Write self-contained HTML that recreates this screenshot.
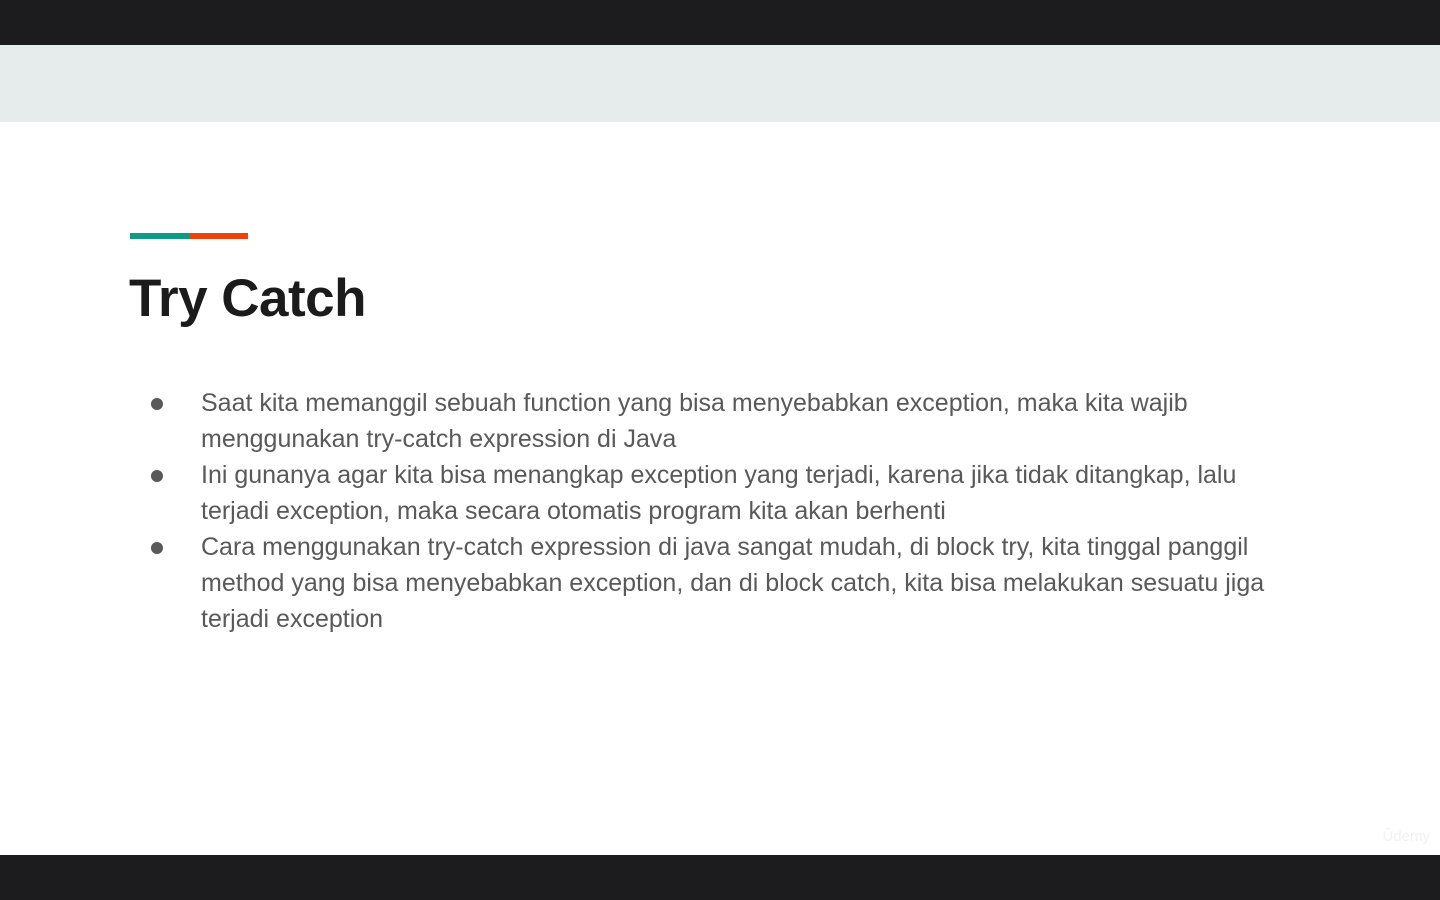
<!DOCTYPE html>
<html><head><meta charset="utf-8"><style>
html,body{margin:0;padding:0}
body{width:1440px;height:900px;background:#1c1c1e;position:relative;overflow:hidden;font-family:"Liberation Sans",sans-serif}
.top{position:absolute;left:0;top:45px;width:1440px;height:77px;background:#e6eceb}
.slide{position:absolute;left:0;top:122px;width:1440px;height:733px;background:#fff}
.b1{position:absolute;left:130px;top:233px;width:60px;height:6px;background:#0e9b86}
.b2{position:absolute;left:190px;top:233px;width:58px;height:6px;background:#f2400b}
h1{position:absolute;left:129px;top:268px;margin:0;font-size:53px;font-weight:bold;color:#1b1b1b;line-height:62px;letter-spacing:-0.5px}
.t{position:absolute;left:201px;font-size:25px;color:#595959;white-space:nowrap;line-height:36px}
.d{position:absolute;left:151px;width:12px;height:12px;border-radius:50%;background:#595959}
.u{position:absolute;right:10px;top:828px;color:#f2f2f2;font-size:15px}
</style></head><body>
<div class="top"></div><div class="slide"></div>
<div class="b1"></div><div class="b2"></div>
<h1>Try Catch</h1>
<div class="d" style="top:398px"></div>
<div class="t" style="top:385px">Saat kita memanggil sebuah function yang bisa menyebabkan exception, maka kita wajib</div>
<div class="t" style="top:421px">menggunakan try-catch expression di Java</div>
<div class="d" style="top:470px"></div>
<div class="t" style="top:457px">Ini gunanya agar kita bisa menangkap exception yang terjadi, karena jika tidak ditangkap, lalu</div>
<div class="t" style="top:493px">terjadi exception, maka secara otomatis program kita akan berhenti</div>
<div class="d" style="top:542px"></div>
<div class="t" style="top:529px">Cara menggunakan try-catch expression di java sangat mudah, di block try, kita tinggal panggil</div>
<div class="t" style="top:565px">method yang bisa menyebabkan exception, dan di block catch, kita bisa melakukan sesuatu jiga</div>
<div class="t" style="top:601px">terjadi exception</div>
<div class="u">Ûdemy</div>
</body></html>
